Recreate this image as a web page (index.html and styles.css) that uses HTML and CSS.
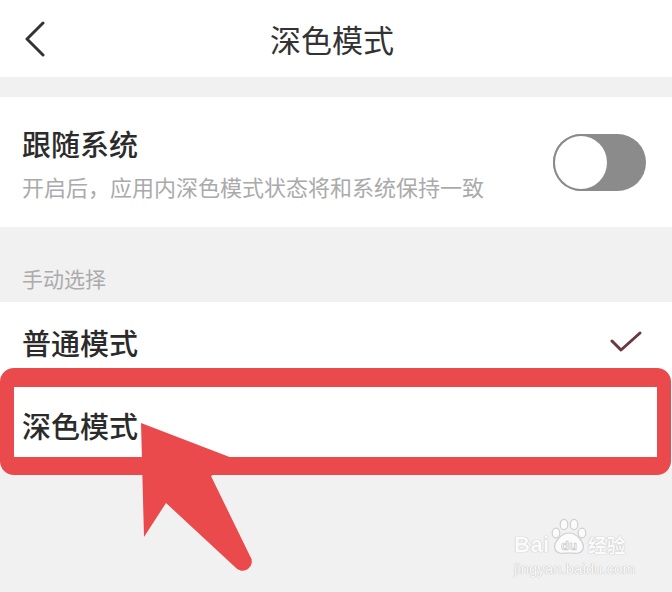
FILE: index.html
```html
<!DOCTYPE html>
<html lang="zh-CN">
<head>
<meta charset="utf-8">
<title>深色模式</title>
<link rel="stylesheet" href="styles.css">
</head>
<body>
<div class="page">
  <header class="topbar">
    <div class="back">
      <svg width="24" height="36" viewBox="0 0 24 36"><polyline points="19,2 3,18 19,34" fill="none" stroke="#333" stroke-width="3" stroke-linecap="round" stroke-linejoin="round"/></svg>
    </div>
    <h1 class="title">深色模式</h1>
    <div></div>
  </header>

  <section class="card follow">
    <div class="follow-text">
      <div class="item-title">跟随系统</div>
      <div class="item-sub">开启后，应用内深色模式状态将和系统保持一致</div>
    </div>
    <div class="toggle"><div class="knob"></div></div>
  </section>

  <div class="group-label">手动选择</div>

  <section class="card list">
    <div class="row">
      <span class="item-title">普通模式</span>
      <svg class="check" width="32" height="24" viewBox="0 0 32 24"><polyline points="2,11 11,20 30,3" fill="none" stroke="#6a3a40" stroke-width="3" stroke-linecap="round" stroke-linejoin="round"/></svg>
    </div>
    <div class="row">
      <span class="item-title">深色模式</span>
    </div>
  </section>

  <svg class="annot" width="672" height="592" viewBox="0 0 672 592">
    <path fill="#ea4a4c" fill-rule="evenodd" d="M14,368 H657 A14,14 0 0 1 671,382 V461 A14,14 0 0 1 657,475 H14 A14,14 0 0 1 0,461 V382 A14,14 0 0 1 14,368 Z M14,387 V457 H657 V387 Z"/>
    <path fill="#ea4a4c" d="M141,423 L240,461 L211,476 L250,556 A9,9 0 0 1 235,567 L166,503 L144,537 Z"/>
  </svg>

  <div class="watermark">
    <div class="wm-top">
      <span class="wm-bai">Bai</span>
      <span class="wm-paw">
        <svg width="38" height="38" viewBox="0 0 38 38">
          <g fill="#fbfbfb" stroke="#cfcfcf" stroke-width="1.2">
            <ellipse cx="6" cy="15" rx="3.8" ry="4.8"/>
            <ellipse cx="14" cy="6.5" rx="3.8" ry="5.2"/>
            <ellipse cx="24" cy="6.5" rx="3.8" ry="5.2"/>
            <ellipse cx="32" cy="15" rx="3.8" ry="4.8"/>
            <path d="M19,15 C27,15 35,25 33,31 C31,37 24,35 19,35 C14,35 7,37 5,31 C3,25 11,15 19,15 Z"/>
          </g>
          <text x="19" y="32" text-anchor="middle" class="wm-du">du</text>
        </svg>
      </span>
      <span class="wm-cn">经验</span>
    </div>
    <div class="wm-url">jingyan.baidu.com</div>
  </div>
</div>
</body>
</html>
```
FILE: styles.css
```css
* { box-sizing: border-box; }
html, body { margin: 0; padding: 0; }
body {
  background: #f1f1f1;
  font-family: "Noto Sans CJK SC", "Noto Sans", sans-serif;
  color: #333;
}
.page {
  position: relative;
  width: 672px;
  height: 592px;
  overflow: hidden;
  background: #f1f1f1;
}
.topbar {
  height: 77px;
  background: #fff;
  display: grid;
  grid-template-columns: 1fr auto 1fr;
  align-items: center;
  margin-bottom: 20px;
}
.back {
  padding-left: 24px;
  display: flex;
  align-items: center;
}
.back svg { display: block; }
.title {
  margin: 0;
  font-size: 31px;
  font-weight: 400;
  line-height: 40px;
  color: #333;
  padding-right: 8px;
}
.card { background: #fff; }
.follow {
  height: 130px;
  display: flex;
  align-items: center;
  justify-content: space-between;
  padding: 0 26px 0 22px;
}
.follow-text {
  display: flex;
  flex-direction: column;
  gap: 8px;
}
.item-title {
  font-size: 29px;
  line-height: 40px;
  color: #2b2b2b;
  font-weight: 500;
}
.item-sub {
  font-size: 22px;
  line-height: 30px;
  color: #aaa;
}
.toggle {
  width: 93px;
  height: 57px;
  border-radius: 29px;
  background: #8b8b8b;
}
.knob {
  width: 56px;
  height: 57px;
  border-radius: 50%;
  background: #fff;
  border: 2px solid #8b8b8b;
}
.group-label {
  padding: 36px 22px 9px;
  font-size: 21px;
  line-height: 30px;
  color: #ababab;
}
.row {
  height: 83px;
  display: flex;
  align-items: center;
  justify-content: space-between;
  padding: 0 30px 0 22px;
}
.row .item-title { margin-top: -3px; }
.check { display: block; margin-top: -4px; }
.annot {
  position: absolute;
  left: 0;
  top: 0;
  pointer-events: none;
}
.watermark {
  position: absolute;
  left: 514px;
  top: 516px;
  color: #fbfbfb;
}
.wm-top {
  display: flex;
  align-items: flex-end;
  height: 40px;
}
.wm-bai {
  font-family: "Liberation Sans", sans-serif;
  font-weight: 700;
  font-size: 22px;
  line-height: 22px;
  text-shadow: 0 0 1px #bdbdbd, 0 0 1px #bdbdbd;
  letter-spacing: 0.5px;
}
.wm-paw svg { display: block; }
.wm-du {
  font-family: "Liberation Sans", sans-serif;
  font-weight: 700;
  font-size: 13px;
  fill: #fbfbfb;
  stroke: #bdbdbd;
  stroke-width: 0.6px;
}
.wm-cn {
  font-family: "Noto Sans CJK SC", sans-serif;
  font-weight: 700;
  font-size: 19px;
  line-height: 22px;
  text-shadow: 0 0 1px #bdbdbd, 0 0 1px #bdbdbd;
}
.wm-url {
  font-family: "Liberation Sans", sans-serif;
  font-size: 15px;
  line-height: 20px;
  margin-top: 3px;
  text-shadow: 0 0 1px #bdbdbd, 0 0 1px #bdbdbd;
}
```
